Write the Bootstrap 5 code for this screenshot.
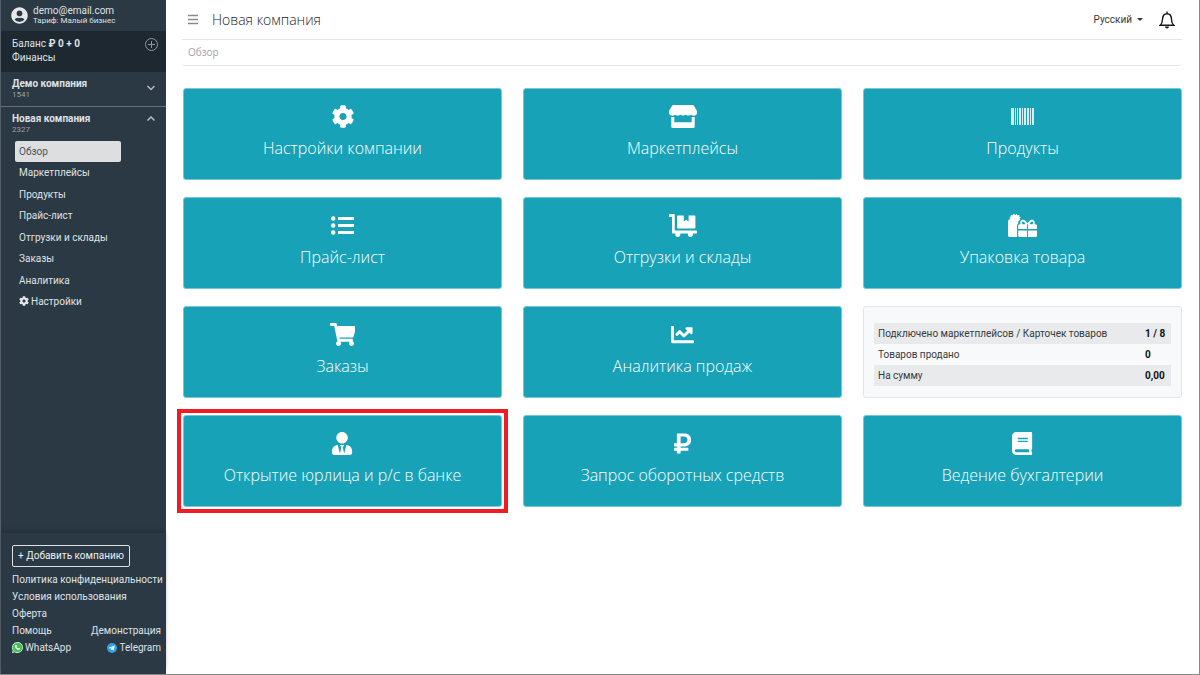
<!DOCTYPE html>
<html lang="ru">
<head>
<meta charset="utf-8">
<meta name="viewport" content="width=device-width, initial-scale=1">
<title>Новая компания — Обзор</title>
<link href="https://cdn.jsdelivr.net/npm/bootstrap@5.3.0/dist/css/bootstrap.min.css" rel="stylesheet">
<style>
  body { font-family: Roboto, "Open Sans", sans-serif; font-size: 10px; color: #343a40; }
  a { text-decoration: none; color: inherit; }
  .shell { border: solid #86888a; border-width: 0 1px 1px 0; }

  .side { width: 166px; flex: none; background: #2b3945; border-left: 1px solid #55606a; color: #dfe2e4; font-size: 10px; line-height: 14px; }
  .side-user { height: 31px; padding: 0 10px; gap: 5px; }
  .side-user .mail { line-height: 11px; }
  .side-user .plan { font-size: 8px; line-height: 10px; }
  .side-balance { background: #1d2830; padding: 6px 7px 7px 11px; }
  .company { padding: 5px 10px 7px 11px; }
  .company + .company { border-top: 1px solid #63707a; }
  .company h2 { font-size: 10px; line-height: 13px; font-weight: 700; margin: 0; }
  .company .num { font-size: 8px; line-height: 9px; color: #98a0a7; }
  .side-menu { min-height: 171px; margin-left: 14px; width: 106px; }
  .side-menu a { padding: 0 4px; line-height: 21px; border-radius: 2px; }
  .side-menu a.active { background: #dddee0; color: #49535b; }
  .side-foot { padding: 12px 5px 18px 11px; line-height: 17px; box-shadow: 0 -3px 4px -2px #1c2730; }
  .side-foot .d-flex, .side-menu .d-flex { column-gap: 2px; }
  .btn-company { --bs-btn-padding-x: 5px; --bs-btn-padding-y: 0px; --bs-btn-font-size: 10px; --bs-btn-border-radius: 2px; line-height: 20px; --bs-btn-color: #eceeef; --bs-btn-border-color: #dfe2e4; margin-bottom: 4px; }

  .page { padding: 0 17px 0 16px; min-width: 0; }
  .topbar { height: 40px; border-bottom: 1px solid #e3e4e6; padding: 0 7px 0 5px; }
  .topbar h1 { font: 300 14px/20px "Open Sans", sans-serif; color: #212529; margin: 0 0 0 13px; }
  .lang { font-size: 10px; color: #343a40; padding: 0; line-height: 14px; border: 0; }
  .lang::after { margin-left: 5px; }
  .crumbs { height: 26px; border-bottom: 1px solid #e3e4e6; border-radius: 3px; padding: 0 6px; color: #9fa3a7; font-family: "Open Sans", sans-serif; }
  .tiles { padding: 22px 0 0 1px; }
  .tiles .row { --bs-gutter-x: 21px; row-gap: 17px; }
  .tile { background: #18a2b8; color: #fff; min-height: 92px; border: 1px solid #79c6d3; border-radius: 3px; padding-top: 16px; font-family: "Open Sans", sans-serif; font-size: 16px; line-height: 24px; font-weight: 300; }
  .tile:hover { background: #138496; color: #fff; }
  .tile svg { height: 23px; margin-bottom: 8px; fill: #fff; }
  .picked::after { content: ""; position: absolute; inset: -7px; border: 4px solid #ee1c24; pointer-events: none; }
  .stats { background: #f8f9fb; border: 1px solid #e3e6ea; border-radius: 3px; min-height: 92px; padding: 16px 10px 10px; }
  .stats table { font-size: 10px; line-height: 21px; margin: 0; color: #343a40; }
  .stats td, .stats th { padding: 0 4px; border: 0; font-weight: 400; }
  .stats tr:nth-child(odd) > * { background: #e9eaec; }
  .stats td { font-weight: 700; color: #111; width: 30px; white-space: nowrap; }
</style>
</head>
<body>
<svg class="d-none" aria-hidden="true">
  <symbol id="gear" viewBox="0 0 512 512"><path d="M487.4 315.7l-42.6-24.6c4.3-23.2 4.3-47 0-70.2l42.6-24.6c4.9-2.8 7.1-8.6 5.5-14-11.1-35.6-30-67.8-54.7-94.6-3.8-4.1-10-5.1-14.8-2.3L380.8 110c-17.9-15.4-38.5-27.3-60.8-35.1V25.8c0-5.6-3.9-10.5-9.4-11.7-36.7-8.2-74.3-7.8-109.2 0-5.5 1.2-9.4 6.1-9.4 11.7V75c-22.2 7.9-42.8 19.8-60.8 35.1L88.7 85.5c-4.9-2.8-11-1.9-14.8 2.3-24.7 26.7-43.6 58.9-54.7 94.6-1.7 5.4.6 11.2 5.5 14L67.3 221c-4.3 23.2-4.3 47 0 70.2l-42.6 24.6c-4.9 2.8-7.1 8.6-5.5 14 11.1 35.6 30 67.8 54.7 94.6 3.8 4.1 10 5.1 14.8 2.3l42.6-24.6c17.9 15.4 38.5 27.3 60.8 35.1v49.2c0 5.6 3.9 10.5 9.4 11.7 36.7 8.2 74.3 7.8 109.2 0 5.5-1.2 9.4-6.1 9.4-11.7v-49.2c22.2-7.9 42.8-19.8 60.8-35.1l42.6 24.6c4.9 2.8 11 1.9 14.8-2.3 24.7-26.7 43.6-58.9 54.7-94.6 1.5-5.5-.7-11.3-5.6-14.1zM256 336c-44.1 0-80-35.9-80-80s35.9-80 80-80 80 35.9 80 80-35.9 80-80 80z"/></symbol>
</svg>
<div class="shell d-flex min-vh-100">
  <aside class="side d-flex flex-column">
    <div class="side-user d-flex align-items-center">
      <svg width="17" height="17" viewBox="0 0 496 512" fill="#e6e8ea"><path d="M248 8C111 8 0 119 0 256s111 248 248 248 248-111 248-248S385 8 248 8zm0 96c48.6 0 88 39.4 88 88s-39.4 88-88 88-88-39.4-88-88 39.4-88 88-88zm0 344c-58.7 0-111.3-26.6-146.5-68.2 18.8-35.4 55.6-59.8 98.5-59.8 2.400 0 4.800.4 7.100 1.100 13 4.200 26.600 6.900 40.900 6.900 14.300 0 28-2.700 40.900-6.900 2.300-.7 4.700-1.100 7.100-1.100 42.900 0 79.700 24.400 98.500 59.800C359.300 421.400 306.700 448 248 448z"/></svg>
      <div class="text-nowrap">
        <div class="mail">demo@email.com</div>
        <div class="plan">Тариф: Малый бизнес</div>
      </div>
    </div>
    <div class="side-balance d-flex justify-content-between">
      <div>
        <div>Баланс <b>₽ 0 + 0</b></div>
        <a href="#" class="d-block">Финансы</a>
      </div>
      <a href="#" aria-label="Пополнить" class="lh-1"><svg width="15" height="15" viewBox="0 0 15 15" fill="none" stroke="#8e979d"><circle cx="7.500" cy="7.500" r="6"/><path d="M7.500 4v7M4 7.500h7"/></svg></a>
    </div>
    <div class="company d-flex justify-content-between align-items-center">
      <div><h2>Демо компания</h2><div class="num">1541</div></div>
      <svg width="10" height="6" viewBox="0 0 10 6" fill="none" stroke="#b4babf" stroke-width="1.500"><path d="M1.500 1L5 4.500 8.500 1"/></svg>
    </div>
    <div class="company d-flex justify-content-between align-items-start">
      <div><h2>Новая компания</h2><div class="num">2327</div></div>
      <svg class="mt-1" width="10" height="6" viewBox="0 0 10 6" fill="none" stroke="#b4babf" stroke-width="1.500"><path d="M1.500 4.500L5 1 8.500 4.500"/></svg>
    </div>
    <nav class="side-menu d-flex flex-column justify-content-between" aria-label="Разделы">
      <a href="#" class="active" aria-current="page">Обзор</a>
      <a href="#">Маркетплейсы</a>
      <a href="#">Продукты</a>
      <a href="#">Прайс-лист</a>
      <a href="#">Отгрузки и склады</a>
      <a href="#">Заказы</a>
      <a href="#">Аналитика</a>
      <a href="#" class="d-flex align-items-center"><svg width="10" height="10" fill="#e6e8ea"><use href="#gear"/></svg>Настройки</a>
    </nav>
    <div class="side-foot mt-auto">
      <button type="button" class="btn btn-outline-light btn-company">+ Добавить компанию</button>
      <a href="#" class="d-block text-nowrap">Политика конфиденциальности</a>
      <a href="#" class="d-block">Условия использования</a>
      <a href="#" class="d-block">Оферта</a>
      <div class="d-flex justify-content-between"><a href="#">Помощь</a><a href="#">Демонстрация</a></div>
      <div class="d-flex justify-content-between">
        <a href="#" class="d-flex align-items-center"><svg width="11" height="11" viewBox="0 0 20 20"><path fill="#e9f7ec" d="M10 0a10 10 0 1 1-5 18.700L0 20l1.400-4.800A10 10 0 0 1 10 0z"/><path fill="#3fc351" d="M10 1.200a8.800 8.800 0 1 1-4.700 16.200L1.700 18.400l1-3.400A8.800 8.800 0 0 1 10 1.200z"/><path fill="#fff" d="M6.800 5.300l1.500.2.8 2.100-.9 1.300c.7 1.400 1.700 2.200 3.100 2.800l1.100-1.300 2.300 1.100c.1 1.700-1.100 2.900-2.800 2.800C8.400 13.700 5.500 11 5.200 7.700c0-1.100.7-2 1.600-2.400z"/></svg>WhatsApp</a>
        <a href="#" class="d-flex align-items-center"><svg width="10" height="10" viewBox="0 0 20 20"><circle cx="10" cy="10" r="10" fill="#2ea3e6"/><path fill="#fff" d="M3.500 9.700L15.500 5l-2 10-3.600-2.600-1.900 1.900-.5-3.100 5.200-4.100-6.600 3.700z"/></svg>Telegram</a>
      </div>
    </div>
  </aside>

  <main class="page flex-grow-1">
    <header class="topbar d-flex align-items-center">
      <button type="button" class="btn d-flex p-0 border-0" aria-label="Меню"><svg width="12" height="11" viewBox="0 0 12 11" stroke="#888b8e" stroke-width="1.500"><path d="M1 1.500h10M1 5.500h10M1 9.500h10"/></svg></button>
      <h1>Новая компания</h1>
      <div class="dropdown ms-auto me-3">
        <button type="button" class="btn lang d-flex align-items-center dropdown-toggle" data-bs-toggle="dropdown">Русский</button>
        <ul class="dropdown-menu"><li><a class="dropdown-item" href="#">English</a></li></ul>
      </div>
      <button type="button" class="btn d-flex p-0 border-0" aria-label="Уведомления"><svg width="16" height="18" viewBox="0 0 16 18" fill="none" stroke="#16191c" stroke-width="1.400"><path d="M8 .5v2M1.200 14.200h13.600c-1.600-1.400-2.200-2.800-2.300-5.700C12.400 4.700 10.700 2.700 8 2.700S3.600 4.700 3.500 8.500c-.1 2.900-.7 4.300-2.300 5.700z"/><path d="M6 15.500h4a2 2 0 0 1-4 0z" fill="#16191c" stroke="none"/></svg></button>
    </header>
    <nav class="crumbs d-flex align-items-center" aria-label="Путь">Обзор</nav>

    <div class="tiles">
      <div class="row row-cols-3">
        <div class="col"><a href="#" class="tile d-flex flex-column align-items-center"><svg><use href="#gear"/></svg>Настройки компании</a></div>
        <div class="col"><a href="#" class="tile d-flex flex-column align-items-center"><svg viewBox="0 0 28 23"><path d="M4.300 0h19.400q.8 0 1.200.7l2.700 4.600c1 2.200.4 4.600-1.600 5.300-1.500.4-3-.1-3.900-1.200-1 1.500-4 1.600-5.300 0-1.200 1.500-4.300 1.500-5.500 0-1.300 1.600-4.300 1.500-5.300 0-.9 1.100-2.400 1.600-3.900 1.200C.1 9.900-.6 7.500.4 5.300L3.100.7Q3.500 0 4.300 0z"/><path d="M2.300 12h3v5.200h17.400V12h3v9.700q0 1.300-1.300 1.300H3.600q-1.300 0-1.300-1.300z"/></svg>Маркетплейсы</a></div>
        <div class="col"><a href="#" class="tile d-flex flex-column align-items-center"><svg viewBox="0 0 23 23" width="23"><path fill-opacity=".82" d="M0 3h3v17H0zM4 3h1v17H4zM6 3h1v17H6zM8 3h2v17H8zM11 3h1v17h-1zM13 3h2v17h-2zM16 3h2v17h-2zM19 3h1v17h-1zM21 3h2v17h-2z"/></svg>Продукты</a></div>

        <div class="col"><a href="#" class="tile d-flex flex-column align-items-center"><svg viewBox="0 0 23 23" width="23"><circle cx="2.200" cy="4.500" r="2.200"/><circle cx="2.200" cy="11.500" r="2.200"/><circle cx="2.200" cy="18.500" r="2.200"/><path d="M7 3h15.500q.5 0 .5.500v2q0 .5-.5.500H7zM7 10h15.500q.5 0 .5.500v2q0 .5-.5.500H7zM7 17h15.500q.5 0 .5.500v2q0 .5-.5.500H7z"/></svg>Прайс-лист</a></div>
        <div class="col"><a href="#" class="tile d-flex flex-column align-items-center"><svg viewBox="0 0 28 23"><path d="M.7 0H5q.8 0 .8.700V16.500h21.500q.7 0 .7.700v1.500q0 .7-.7.700h-3.500c.6 1.900-.6 3.600-2.400 3.600s-3-1.700-2.400-3.600h-7.800c.6 1.900-.6 3.600-2.400 3.600s-3-1.700-2.400-3.600H3.700q-.7 0-.7-.7V3H.7Q0 3 0 2.300V.7Q0 0 .7 0z"/><path d="M8.800 1.400h6v6l2.400-1.600 2.400 1.600v-6h6q.8 0 .8.800v11.600q0 .8-.8.800H8.800q-.8 0-.8-.8V2.200q0-.8.8-.8z"/></svg>Отгрузки и склады</a></div>
        <div class="col"><a href="#" class="tile d-flex flex-column align-items-center"><svg viewBox="0 0 29 23"><path d="M2.500 4.800L1.400 3.300 3 2.200 2.700.9l2 .3.800-1.200 1.600 1.100L8.600 0l.8 1.200 2-.3-.2 1.600 1.600.8-1.200 1.300.5 1.500c-1.900.7-2.300 2-1.800 3.500-.8.500-1.200 1-1.200 2V23H1.400Q0 23 0 21.600V7.500Q0 5.300 2.500 4.800z"/><path fill-rule="evenodd" d="M10.200 15v-3.200q0-1.500 1.500-1.500h.9c-1-2.800.8-5 3-4.500 1.600.4 2.900 2.100 3.900 3.800 1-1.700 2.300-3.400 3.900-3.800 2.200-.5 4 1.700 3 4.500h1.100q1.500 0 1.500 1.500V15h-8.900v-4.700h-1V15zm4.200-4.700h3.200c-1-1.800-2-3-3-2.700-.9.300-1 1.500-.2 2.700zm7 0h3.200c.8-1.200.7-2.400-.2-2.700-1-.3-2 .9-3 2.700zM10.200 16.500h8.900V23h-7.400q-1.500 0-1.500-1.500zM20.100 16.500H29v5q0 1.500-1.500 1.500h-7.400z"/></svg>Упаковка товара</a></div>

        <div class="col"><a href="#" class="tile d-flex flex-column align-items-center"><svg viewBox="0 0 576 512"><path d="M528.120 301.319l47.273-208C578.806 78.301 567.391 64 551.990 64H159.208l-9.166-44.810C147.758 8.021 137.930 0 126.529 0H24C10.745 0 0 10.745 0 24v16c0 13.255 10.745 24 24 24h69.883l70.248 343.435C147.325 417.100 136 435.222 136 456c0 30.928 25.072 56 56 56s56-25.072 56-56c0-15.674-6.447-29.835-16.824-40h209.647C430.447 426.165 424 440.326 424 456c0 30.928 25.072 56 56 56s56-25.072 56-56c0-22.172-12.888-41.332-31.579-50.405l5.517-24.276c3.413-15.018-8.002-29.319-23.403-29.319H218.117l-6.545-32h293.145c11.206 0 20.920-7.754 23.403-18.681z"/></svg>Заказы</a></div>
        <div class="col"><a href="#" class="tile d-flex flex-column align-items-center"><svg viewBox="0 0 512 512"><path d="M496 384H64V80c0-8.840-7.160-16-16-16H16C7.160 64 0 71.160 0 80v336c0 17.670 14.330 32 32 32h464c8.840 0 16-7.160 16-16v-32c0-8.840-7.160-16-16-16zM464 96H345.940c-21.380 0-32.090 25.850-16.970 40.970l32.400 32.400L288 242.750l-73.370-73.370c-12.500-12.500-32.760-12.500-45.250 0l-68.690 68.690c-6.250 6.250-6.250 16.380 0 22.630l22.620 22.620c6.250 6.250 16.380 6.250 22.630 0L192 237.250l73.370 73.370c12.500 12.500 32.760 12.500 45.250 0l96-96 32.400 32.400c15.120 15.120 40.970 4.410 40.970-16.970V112c.01-8.840-7.150-16-15.990-16z"/></svg>Аналитика продаж</a></div>
        <div class="col">
          <div class="stats">
            <table class="w-100">
              <tbody>
                <tr><th scope="row">Подключено маркетплейсов / Карточек товаров</th><td>1 / 8</td></tr>
                <tr><th scope="row">Товаров продано</th><td>0</td></tr>
                <tr><th scope="row">На сумму</th><td>0,00</td></tr>
              </tbody>
            </table>
          </div>
        </div>

        <div class="col"><a href="#" class="tile picked position-relative d-flex flex-column align-items-center"><svg viewBox="0 0 448 512"><path d="M224 256c70.700 0 128-57.300 128-128S294.700 0 224 0 96 57.300 96 128s57.300 128 128 128zm95.800 32.600L272 480l-32-136 32-56h-96l32 56-32 136-47.800-191.400C56.900 292 0 350.300 0 422.400V464c0 26.500 21.500 48 48 48h352c26.500 0 48-21.500 48-48v-41.600c0-72.100-56.900-130.400-128.200-133.800z"/></svg>Открытие юрлица и р/с в банке</a></div>
        <div class="col"><a href="#" class="tile d-flex flex-column align-items-center"><svg viewBox="0 0 384 512"><path d="M239.360 320C324.480 320 384 260.542 384 175.071S324.480 32 239.360 32H76c-6.627 0-12 5.373-12 12v206.632H12c-6.627 0-12 5.373-12 12V308c0 6.627 5.373 12 12 12h52v32H12c-6.627 0-12 5.373-12 12v40c0 6.627 5.373 12 12 12h52v52c0 6.627 5.373 12 12 12h58.560c6.627 0 12-5.373 12-12v-52H308c6.627 0 12-5.373 12-12v-40c0-6.627-5.373-12-12-12H146.560v-32h92.800zm-92.800-219.252h78.720c46.720 0 74.880 29.110 74.880 74.323 0 45.832-28.160 75.561-76.160 75.561h-77.440V100.748z"/></svg>Запрос оборотных средств</a></div>
        <div class="col"><a href="#" class="tile d-flex flex-column align-items-center"><svg viewBox="0 0 448 512"><path d="M448 360V24c0-13.300-10.700-24-24-24H96C43 0 0 43 0 96v320c0 53 43 96 96 96h328c13.300 0 24-10.700 24-24v-16c0-7.500-3.500-14.300-8.900-18.700-4.200-15.400-4.200-59.300 0-74.700 5.400-4.300 8.900-11.100 8.900-18.600zM128 134c0-3.300 2.700-6 6-6h212c3.300 0 6 2.700 6 6v20c0 3.300-2.700 6-6 6H134c-3.300 0-6-2.700-6-6v-20zm0 64c0-3.300 2.700-6 6-6h212c3.300 0 6 2.700 6 6v20c0 3.300-2.700 6-6 6H134c-3.300 0-6-2.700-6-6v-20zm253.400 250H96c-17.700 0-32-14.300-32-32 0-17.600 14.400-32 32-32h285.400c-1.900 17.100-1.900 46.900 0 64z"/></svg>Ведение бухгалтерии</a></div>
      </div>
    </div>
  </main>
</div>
<script src="https://cdn.jsdelivr.net/npm/bootstrap@5.3.0/dist/js/bootstrap.bundle.min.js"></script>
</body>
</html>
